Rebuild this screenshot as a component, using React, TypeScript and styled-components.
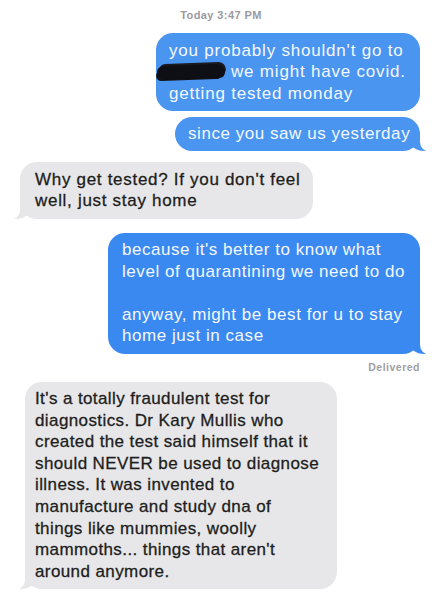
import React from "react";
import styled, { createGlobalStyle, css } from "styled-components";

const Global = createGlobalStyle`
  html, body { margin: 0; padding: 0; background: #ffffff; }
  body { font-family: "Liberation Sans", Arial, sans-serif; -webkit-font-smoothing: antialiased; }
`;

const Thread = styled.div`
  width: 442px;
  height: 600px;
  box-sizing: border-box;
  padding: 9px 22px 0 0;
  display: flex;
  flex-direction: column;
  overflow: hidden;
  background: #fff;
`;

const Stamp = styled.div`
  align-self: center;
  margin-left: 22px;
  font-size: 11px;
  line-height: 13px;
  letter-spacing: 0.4px;
  color: #9a9aa0;
  font-weight: 600;
`;

const Status = styled.div`
  align-self: flex-end;
  margin-top: 7px;
  font-size: 10.5px;
  line-height: 12px;
  letter-spacing: 0.5px;
  color: #a0a0a5;
  font-weight: 600;
`;

type BubbleProps = {
  $out?: boolean;
  $w: number;
  $top: number;
  $left?: number;
  $tail?: boolean;
  $tone?: string;
  $padX?: number;
  $track?: number;
};

const Bubble = styled.div<BubbleProps>`
  position: relative;
  box-sizing: border-box;
  width: ${(p) => p.$w}px;
  margin-top: ${(p) => p.$top}px;
  padding: 6.5px ${(p) => p.$padX ?? 13}px;
  border-radius: 17px;
  font-size: 17px;
  line-height: 21.6px;
  letter-spacing: ${(p) => p.$track ?? 0}px;
  ${(p) =>
    p.$out
      ? css`
          align-self: flex-end;
          background: ${p.$tone ?? "#3f8ff0"};
          color: #f4f8ff;
        `
      : css`
          align-self: flex-start;
          margin-left: ${p.$left ?? 20}px;
          background: #e7e7ea;
          color: #1e1e20;
          -webkit-text-stroke: 0.3px #1e1e20;
        `}
  ${(p) =>
    p.$tail &&
    css`
      &::after {
        content: "";
        position: absolute;
        bottom: 0;
        width: 16px;
        height: 18px;
        background: inherit;
        ${p.$out
          ? css`
              right: -6px;
              border-bottom-left-radius: 14px 10px;
            `
          : css`
              left: -6px;
              border-bottom-right-radius: 14px 10px;
            `}
      }
      &::before {
        content: "";
        position: absolute;
        bottom: -1px;
        width: 12px;
        height: 20px;
        background: #fff;
        z-index: 1;
        ${p.$out
          ? css`
              right: -12px;
              border-bottom-left-radius: 10px;
            `
          : css`
              left: -12px;
              border-bottom-right-radius: 10px;
            `}
      }
    `}
`;

const Line = styled.span`
  display: block;
  white-space: nowrap;
`;

const Blank = styled.span`
  display: block;
  height: 21.6px;
`;

const Redact = styled.span`
  display: inline-block;
  width: 68px;
  height: 14px;
  margin: 0 6px -2px -12px;
  background: #0e0f14;
  border-radius: 9px 12px 8px 10px;
  transform: rotate(-2deg);
  box-shadow: 2px -3px 0 -1px #1a1b22, -3px 3px 0 -2px #14151b;
`;

export default function App() {
  return (
    <>
      <Global />
      <Thread>
        <Stamp>Today 3:47 PM</Stamp>
        <Bubble $out $w={264} $top={11} $tone="#4a95f0" $track={0.8}>
          <Line>you probably shouldn't go to</Line>
          <Line>
            <Redact />
            we might have covid.
          </Line>
          <Line>getting tested monday</Line>
        </Bubble>
        <Bubble $out $w={245} $top={6} $tail $tone="#4a95f0" $track={0.55}>
          <Line>since you saw us yesterday</Line>
        </Bubble>
        <Bubble $w={293} $top={11} $left={20} $tail $padX={15} $track={0.7}>
          <Line>Why get tested? If you don't feel</Line>
          <Line>well, just stay home</Line>
        </Bubble>
        <Bubble $out $w={312} $top={14} $tail $tone="#3a89f1" $padX={14} $track={0.55}>
          <Line>because it's better to know what</Line>
          <Line>level of quarantining we need to do</Line>
          <Blank />
          <Line>anyway, might be best for u to stay</Line>
          <Line>home just in case</Line>
        </Bubble>
        <Status>Delivered</Status>
        <Bubble $w={312} $top={9} $left={25} $tail $padX={10} $track={0.4}>
          <Line>It's a totally fraudulent test for</Line>
          <Line>diagnostics. Dr Kary Mullis who</Line>
          <Line>created the test said himself that it</Line>
          <Line>should NEVER be used to diagnose</Line>
          <Line>illness. It was invented to</Line>
          <Line>manufacture and study dna of</Line>
          <Line>things like mummies, woolly</Line>
          <Line>mammoths... things that aren't</Line>
          <Line>around anymore.</Line>
        </Bubble>
      </Thread>
    </>
  );
}
